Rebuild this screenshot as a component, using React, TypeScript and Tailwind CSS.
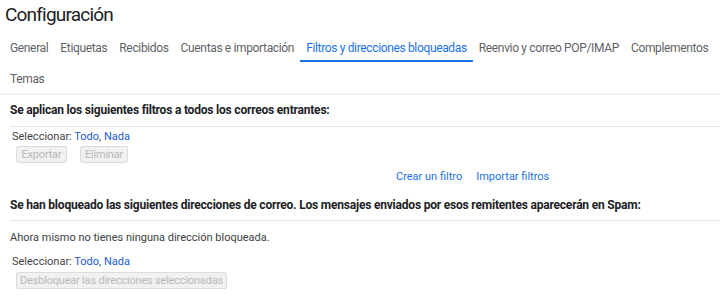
const tabs = [
  'General',
  'Etiquetas',
  'Recibidos',
  'Cuentas e importación',
  'Filtros y direcciones bloqueadas',
  'Reenvio y correo POP/IMAP',
  'Complementos',
  'Temas',
];

function SelectRow() {
  return (
    <div className="pl-[12px] text-[11px] leading-[14px] text-[#444]">
      Seleccionar: <span className="text-[#1a5ad6]">Todo</span>, <span className="text-[#1a5ad6]">Nada</span>
    </div>
  );
}

function GhostButton({ label, width }: { label: string; width: string }) {
  return (
    <button
      className={`${width} h-[17px] border border-[#dcdcdc] bg-[#f1f1f1] rounded-[2px] text-[11px] leading-[15px] tracking-[-0.2px] text-[#b9b9b9] text-center`}
    >
      {label}
    </button>
  );
}

export default function App() {
  return (
    <div className="w-[720px] h-[297px] bg-white overflow-hidden font-['Roboto',sans-serif]">
      {/* Title */}
      <div className="h-[31px] pl-[5px] pt-[2px] text-[19px] leading-[26px] tracking-[-0.8px] text-[#202124]">
        Configuración
      </div>

      {/* Tabs */}
      <div className="flex flex-wrap pl-[4px]">
        {tabs.map((tab) => {
          const active = tab === 'Filtros y direcciones bloqueadas';
          return (
            <div
              key={tab}
              className={
                active
                  ? 'h-[31px] px-[6px] pt-[10px] text-[12px] leading-[15px] tracking-[-0.35px] text-[#1a73e8] border-b-2 border-[#1a73e8]'
                  : 'h-[31px] px-[6px] pt-[10px] text-[12px] leading-[15px] tracking-[-0.35px] text-[#5f6368]'
              }
            >
              {tab}
            </div>
          );
        })}
      </div>
      <div className="h-[2px] bg-[#f1f1f1]" />

      {/* Filters */}
      <div className="pl-[10px] pt-[8px] pb-[8px] text-[12px] leading-[15px] tracking-[-0.2px] font-bold text-[#202124]">
        Se aplican los siguientes filtros a todos los correos entrantes:
      </div>
      <div className="ml-[10px] h-px bg-[#e5e5e5]" />
      <div className="pt-[3px]">
        <SelectRow />
        <div className="flex gap-[13px] pl-[16px] pt-[2px]">
          <GhostButton label="Exportar" width="w-[51px]" />
          <GhostButton label="Eliminar" width="w-[48px]" />
        </div>
      </div>
      <div className="flex gap-[14px] pl-[396px] pt-[7px] text-[11px] leading-[14px] text-[#1a73e8]">
        <span>Crear un filtro</span>
        <span>Importar filtros</span>
      </div>

      {/* Blocked */}
      <div className="pl-[10px] pt-[14px] pb-[7px] text-[12px] leading-[15px] tracking-[-0.2px] font-bold text-[#202124]">
        Se han bloqueado las siguientes direcciones de correo. Los mensajes enviados por esos remitentes aparecerán en Spam:
      </div>
      <div className="ml-[10px] h-px bg-[#e5e5e5]" />
      <div className="pl-[10px] pt-[10px] text-[11px] leading-[14px] text-[#3c4043]">
        Ahora mismo no tienes ninguna dirección bloqueada.
      </div>
      <div className="pt-[10px]">
        <SelectRow />
        <div className="flex pl-[16px] pt-[3px]">
          <GhostButton label="Desbloquear las direcciones seleccionadas" width="w-[211px]" />
        </div>
      </div>
    </div>
  );
}
